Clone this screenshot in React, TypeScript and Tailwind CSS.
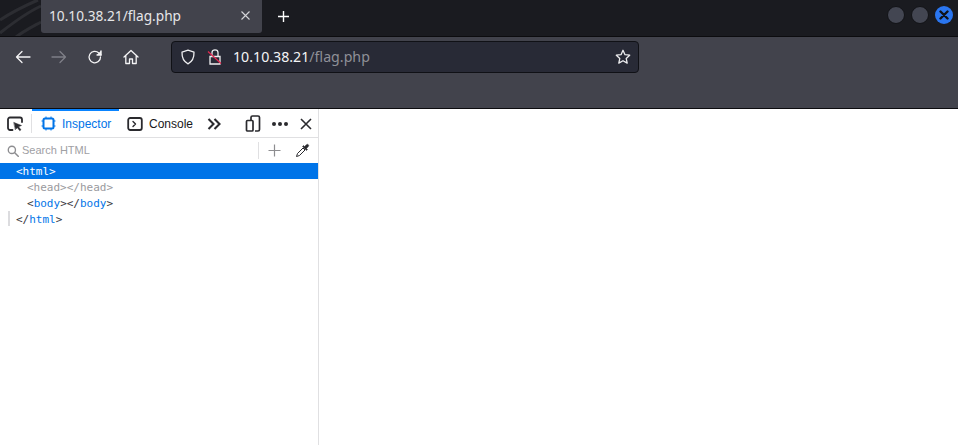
import { ReactNode } from 'react';

const UI_FONT = "font-['Noto_Sans',sans-serif]";
const DEVTOOLS_FONT = "font-['Liberation_Sans',sans-serif]";

function Icon({ size = 16, children, className }: { size?: number; children: ReactNode; className?: string }) {
  return (
    <svg
      width={size}
      height={size}
      viewBox="0 0 16 16"
      fill="none"
      stroke="currentColor"
      strokeWidth="1.3"
      strokeLinecap="round"
      strokeLinejoin="round"
      className={className}
    >
      {children}
    </svg>
  );
}

function WindowButton({ close }: { close?: boolean }) {
  if (close) {
    return (
      <div className="flex h-[18px] w-[18px] items-center justify-center rounded-full bg-[#2a76f0]">
        <svg width="10" height="10" viewBox="0 0 10 10" stroke="#10131a" strokeWidth="2.4" strokeLinecap="round">
          <path d="M1.500 1.500l7 7M8.500 1.500l-7 7" />
        </svg>
      </div>
    );
  }
  return <div className="h-[18px] w-[18px] rounded-full border border-[#121317] bg-[#434652]" />;
}

function TabBar() {
  return (
    <div className="relative flex h-[37px] items-start overflow-hidden border-b border-[#0c0c0f] bg-[#1a1b20]">
      <svg className="absolute left-0 top-0" width="130" height="37" viewBox="0 0 130 37" fill="none" stroke="#2c2d32" strokeWidth="3">
        <path d="M0 20C12 12 24 6 38 0M0 33C14 22 28 12 41 6M16 37C24 31 32 27 41 22" />
      </svg>
      <div className={`relative ml-[41px] flex h-[33px] w-[221px] items-center rounded-b-[3px] bg-[#42434c] pl-[8px] pr-[12px] text-[13.700px] text-[#e6e6e8] ${UI_FONT}`}>
        <span className="flex-1">10.10.38.21/flag.php</span>
        <svg className="-mt-[3px]" width="9" height="9" viewBox="0 0 9 9" stroke="#d4d4d8" strokeWidth="1.100">
          <path d="M.5 .5l8 8M8.500 .5l-8 8" />
        </svg>
      </div>
      <svg className="relative ml-[15px] mt-[10px] text-white" width="13" height="13" viewBox="0 0 13 13" stroke="currentColor" strokeWidth="1.400">
        <path d="M6.500 1v11M1 6.500h11" />
      </svg>
      <div className="relative ml-auto mr-[5px] mt-[6px] flex gap-[6px]">
        <WindowButton />
        <WindowButton />
        <WindowButton close />
      </div>
    </div>
  );
}

function Toolbar() {
  return (
    <div className="h-[72px] border-b border-[#0c0c0f] bg-[#42434c]">
      <div className="flex items-center pt-[4px]">
        <div className="ml-[15px] flex w-[156px] items-center text-[#f4f4f5]">
          <Icon className="w-[16px]">
            <path d="M15 8H1.500M7 2.500L1.500 8 7 13.500" />
          </Icon>
          <Icon className="ml-[20px] text-[#7e7f87]">
            <path d="M1 8h13.500M9 2.500L14.500 8 9 13.500" />
          </Icon>
          <Icon className="ml-[20px]">
            <path d="M13.500 8a5.700 5.700 0 1 1-1.700-4L14 6" />
            <path d="M14.200 1.500V6H9.800" fill="currentColor" stroke="none" />
            <path d="M14 2v4h-4" />
          </Icon>
          <Icon className="ml-[20px]">
            <path d="M1 8l7-6.500L15 8M2.800 6.500V14.500h3.700v-4.500h3v4.500h3.700V6.500" />
          </Icon>
        </div>
        <div className={`flex h-[32px] w-[468px] items-center rounded-[4px] border border-[#101116] bg-[#282a36] pl-[8px] pr-[7px] text-[14.200px] ${UI_FONT}`}>
          <Icon className="text-[#eeeef0]">
            <path d="M8 1.200l6 1.900c.2 5.500-1.600 9.600-6 11.700-4.400-2.100-6.200-6.200-6-11.700z" />
          </Icon>
          <svg className="ml-[11px]" width="16" height="16" viewBox="0 0 16 16" fill="none">
            <path d="M5 7V3.500a3 2.700 0 0 1 6 0V7M3 7.500h10v7.500H3z" stroke="#eeeef0" strokeWidth="1.300" />
            <path d="M1 2.500l13 12" stroke="#e22850" strokeWidth="1.300" />
          </svg>
          <span className="ml-[10px] flex-1 text-[#f4f4f5]">
            10.10.38.21<span className="text-[#8f9098]">/flag.php</span>
          </span>
          <Icon className="text-[#eeeef0]">
            <path d="M8 1.300l2 4.400 4.700.5-3.500 3.200 1 4.700L8 11.700l-4.200 2.400 1-4.700L1.300 6.200l4.700-.5z" />
          </Icon>
        </div>
      </div>
    </div>
  );
}

function DevtoolsTabs() {
  return (
    <div className={`flex h-[29px] items-center border-b border-[#e0e0e2] pt-[1px] text-[12px] text-[#18181a] ${DEVTOOLS_FONT}`}>
      <Icon className="ml-[7px] text-[#2a2a2e]" size={16}>
        <path d="M5.500 14H3a2 2 0 0 1-2-2V3.500a2 2 0 0 1 2-2h10a2 2 0 0 1 2 2V6" strokeWidth="1.800" />
        <path d="M7 6.500l7.500 3-3 1.200 2.500 3-1.200 1-2.500-3L8.500 13.500z" fill="currentColor" strokeWidth="0.500" />
      </Icon>
      <div className="ml-[8px] h-[19px] w-px bg-[#e0e0e2]" />
      <div className="relative flex h-full w-[87px] items-center text-[#0074e8]">
        <div className="absolute -top-[1px] left-0 h-[2px] w-full bg-[#0a84ff]" />
        <svg className="ml-[9px]" width="15" height="15" viewBox="0 0 15 15" fill="none" stroke="currentColor">
          <rect x="2.500" y="2.500" width="10" height="10" rx="1.500" strokeWidth="2" />
          <path d="M5 .5v2M10 .5v2M5 12.500v2M10 12.500v2M.5 5h2M.5 10h2M12.500 5h2M12.500 10h2" strokeWidth="1" />
        </svg>
        <span className="ml-[6px]">Inspector</span>
      </div>
      <Icon className="ml-[8px] text-[#2a2a2e]" size={16}>
        <rect x="1.200" y="2" width="13.600" height="12" rx="2" strokeWidth="1.800" />
        <path d="M6 5.500L8.500 8 6 10.500" strokeWidth="1.400" />
      </Icon>
      <span className="ml-[6px]">Console</span>
      <svg className="ml-[14px] text-[#2a2a2e]" width="14" height="12" viewBox="0 0 14 12" fill="none" stroke="currentColor" strokeWidth="2.100">
        <path d="M1.500 1l5 5-5 5M7.500 1l5 5-5 5" />
      </svg>
      <svg className="ml-[24px] text-[#2a2a2e]" width="16" height="17" viewBox="0 0 16 17" fill="none" stroke="currentColor" strokeWidth="1.700">
        <path d="M6 5V2.500a1.500 1.500 0 0 1 1.500-1.500h5.500a1.500 1.500 0 0 1 1.500 1.500v12a1.500 1.500 0 0 1-1.500 1.500h-3" />
        <rect x="1.500" y="5.500" width="6.500" height="10.500" rx="1" />
      </svg>
      <div className="ml-[11px] flex gap-[2px]">
        <span className="h-[4px] w-[4px] rounded-full bg-[#2a2a2e]" />
        <span className="h-[4px] w-[4px] rounded-full bg-[#2a2a2e]" />
        <span className="h-[4px] w-[4px] rounded-full bg-[#2a2a2e]" />
      </div>
      <svg className="ml-[12px] text-[#2a2a2e]" width="12" height="12" viewBox="0 0 12 12" stroke="currentColor" strokeWidth="1.600">
        <path d="M1 1l10 10M11 1L1 11" />
      </svg>
    </div>
  );
}

function SearchRow() {
  return (
    <div className={`flex h-[25px] items-center text-[11px] text-[#a0a0a4] ${DEVTOOLS_FONT}`}>
      <Icon className="ml-[7px] text-[#8d8d90]" size={12}>
        <circle cx="6.500" cy="6.500" r="4.800" strokeWidth="1.800" />
        <path d="M10 10l5 5" strokeWidth="2" />
      </Icon>
      <span className="ml-[3px] flex-1">Search HTML</span>
      <div className="h-[17px] w-px bg-[#e0e0e2]" />
      <svg className="ml-[9px] text-[#8d8d90]" width="13" height="13" viewBox="0 0 13 13" stroke="currentColor" strokeWidth="1.200">
        <path d="M6.500 .5v12M.5 6.500h12" />
      </svg>
      <svg className="ml-[14px] mr-[8px] text-[#2a2a2e]" width="15" height="15" viewBox="0 0 15 15" fill="none" stroke="currentColor">
        <path d="M1.500 13.500l1-3L8 5l2 2-5.500 5.500z" strokeWidth="1" />
        <path d="M7.500 3.500l4 4 1-1-1-1 1.800-2a1.200 1.200 0 0 0-1.800-1.800l-2 1.800-1-1z" fill="currentColor" strokeWidth="0.500" />
      </svg>
    </div>
  );
}

function MarkupTree() {
  const tag = 'text-[#0074e8]';
  return (
    <div className="font-['DejaVu_Sans_Mono',monospace] text-[11px] leading-[18px] text-[#38383d]">
      <div className="h-[16px] bg-[#0074e8] pl-[16px] text-white">&lt;html&gt;</div>
      <div className="h-[16px] pl-[27px] text-[#9a9a9e]">&lt;head&gt;&lt;/head&gt;</div>
      <div className="h-[16px] pl-[27px]">
        &lt;<span className={tag}>body</span>&gt;&lt;/<span className={tag}>body</span>&gt;
      </div>
      <div className="relative h-[16px] pl-[16px]">
        <div className="absolute left-[8px] top-0 h-[15px] w-[2px] bg-[#dcdcdf]" />
        &lt;/<span className={tag}>html</span>&gt;
      </div>
    </div>
  );
}

export default function App() {
  return (
    <div className="flex h-[445px] w-[958px] flex-col overflow-hidden bg-white">
      <TabBar />
      <Toolbar />
      <div className="flex min-h-0 flex-1">
        <div className="w-[319px] border-r border-[#e0e0e2] bg-white">
          <DevtoolsTabs />
          <SearchRow />
          <MarkupTree />
        </div>
        <div className="flex-1 bg-white" />
      </div>
    </div>
  );
}
